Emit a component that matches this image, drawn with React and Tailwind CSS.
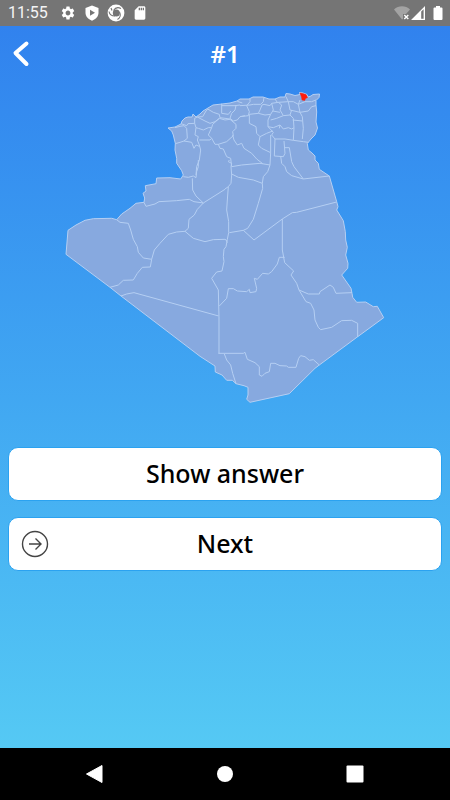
import { MdSettings, MdSdCard } from 'react-icons/md';

const COUNTRY =
  'M168 128L175 127 181 124 182 121 185 118 188 117 192 117 193 114 196 117 200 114 203 111 208 108 213 105 222 104 230 103 237 101 240 99 249 99 253 97 263 97 269 99 275 99 280 97 285 97 286 93.5 290 94 295 95.5 300 94.5 299.5 92.5 303 93 307 94.5 308 97 311 96 313 94.5 319.5 94 319 97.5 316 100.5 316 105 316.7 112 316 122 317.5 128 315 135 311 139 307.3 143.5 308.3 150 312 153 315 156 315 160 318.3 163.3 319.3 169.3 329.3 176 336.7 201.7 338 206.7 336.7 210 343.3 220.7 345.3 231.7 345.7 240 347.3 247.3 345.7 255 348 263.3 347.7 268.3 341.7 275 351 288.3 352 293.3 352.7 297.3 356.7 302.3 365.7 302 373.3 306.7 377.3 306.3 383.7 317.7 357.7 336.7 319.3 365 315 368.3 289.3 393.7 250 402.3 246.7 399.3 248 395 248 387.3 244 385.7 236 383.7 232.3 380.3 226.7 380.3 222 375 215.3 372 215 366 200 356.3 159 325 121 296 110 287.3 66 254.3 68 230.3 76 225 85 220.3 93.3 218.7 111.7 218.3 116.7 219.7 121.7 214 130 208.3 136 203.3 144 202.3 144.7 198 143 193.3 146 191 145.3 185.7 156 183.7 156.7 178 170 177.7 180.7 179 183.3 175 181.7 170.7 176.7 163.3 176.7 158.3 175 150 175.3 143.3 173.3 135 171.7 131Z';

// province borders, one sheet for each part of the country
const BORDERS = [
  {
    id: 'north-west',
    transform: 'translate(160 85) scale(0.3333)',
    d: 'M45 128L60 124 72 122 80 130 82 160 72 168 60 172 46 176M72 168L95 172 102 190 108 180 118 184M63 116L80 122 84 116 104 115 108 128 115 130M104 115L104 100 112 96 135 108 150 115 165 110 178 100M108 128L105 150 115 155 112 165 118 180 122 195 118 225 110 245 108 270M115 130L130 135 145 128 155 128 158 118 178 100M155 128L145 150 155 160 150 165 118 165M155 160L165 178 175 178M112 96L128 95 138 78 143 72 160 82 178 88 180 98 210 102M185 56L185 85 205 88 213 78M185 62L228 62 225 75 215 85 210 100 220 108 232 105 240 95 255 92M178 100L195 105 210 103 228 118 228 130 218 140 220 152 200 170 175 178 180 190 190 192 200 215 212 220 215 245M218 150L222 165 232 180 245 175 252 190 275 205 290 222 308 236M225 62L240 60M232 49L247 54',
  },
  {
    id: 'north-east',
    transform: 'translate(240 85) scale(0.3333)',
    d: 'M0 62L30 60 40 58 62 58 70 50 72 37M20 62L30 50 30 42M20 62L28 80 25 92 0 95M28 88L55 85 60 75 66 60 72 58 90 62 95 55 115 52 145 50M95 55L100 75 92 88 84 105 84 125M55 85L75 90 92 88M98 78L120 82M115 52L125 60 120 75 130 92M105 42L112 52M138 35L145 50 160 50 175 58 195 50 215 50 228 45M145 50L150 75 180 82 205 78 215 65 228 62M180 45L175 58 180 82M92 105L110 100 130 92 150 90 155 75M150 90L160 100 162 128 155 132 145 128 130 132 120 120 100 128 84 125M120 120L118 130M180 82L187 95 190 130 187 162M158 105L187 108M84 125L100 142 95 150 105 162 135 162 160 166 190 170 205 172M162 128L160 166M28 88L28 115 48 125 50 145 60 155 55 180 65 190 92 203M60 155L80 145 98 138M92 150L92 203 90 240M105 162L103 213 130 215 135 205 132 168M122 213L125 235M135 188L148 188 155 230',
  },
  {
    id: 'west',
    transform: 'translate(60 160) scale(0.3333)',
    d: 'M170 179L180 187 205 190 212 210 220 238 232 260 235 277 250 294 275 298M252 127L258 139 285 132 297 125 350 122 388 118 402 125 430 129 495 88M397 55L398 90 408 108 430 129 412 148 403 165 387 178 385 205 375 214 350 216 325 223 300 250 283 270 275 298 271 321 247 322 232 340 220 360 190 361 175 375 150 382M375 214L400 235 435 245 460 239 495 238M370 50L385 52 400 48 408 53 410 35 415 20 415 0M183 408L200 402 222 398 240 403 476 468',
  },
  {
    id: 'east',
    transform: 'translate(200 160) scale(0.3333)',
    d: 'M75 87L85 80 93 70 95 45 93 20 95 10 85 5 88 0M95 20L125 15 180 10 210 15 203 35 190 50 187 70 188 85 175 130 160 178 143 205 130 211 88 218M95 42L115 52 160 60 187 70M85 80L82 120 80 150 86 185 86 218 82 238 78 260 72 268 70 290 72 305 66 333 50 336 35 355 55 390 57 470 57 580M75 239L78 239 82 248M130 211L162 240 247 177 277 158 290 157 410 126M247 177L247 270 254 308 281 333 273 345 290 370 297 390 318 425 332 430 342 450 345 480 355 502 362 509 395 502 425 482 455 481 473 490 473 531M297 390L325 402 358 402 360 395 390 375 400 382 408 400 456 398M254 292L238 292 232 312 215 335 205 342 188 340 172 358 163 355 170 385 168 395 150 398 148 388 140 395 112 393 100 386 85 386 80 415 58 438M245 10L255 20 260 35 275 47 310 57 388 48M275 5L282 20 310 57',
  },
  {
    id: 'south',
    transform: 'translate(200 290) scale(0.3333)',
    d: 'M55 190L130 190 135 187 142 208 165 218 178 230 178 255 186 259 195 250 208 245 212 220 225 220 240 227 260 228 265 232 288 232 296 205 302 197 315 200 328 211 340 209 358 225M73 192L80 210 92 225 98 250 108 281',
  },
];

const SELECTED = 'M300 93L302.500 93.500 306 94.500 307.500 97.500 305.500 98.500 304.700 100.500 302 100 301.500 97Z';

function StatusBar() {
  return (
    <div className="flex h-[26px] shrink-0 items-center justify-between bg-[#757575] pr-[7px] pl-2 text-white">
      <div className="flex items-center gap-2">
        <span className="mr-1 font-[Roboto] text-base leading-none text-gray-100">11:55</span>
        <MdSettings className="size-4" />
        <svg viewBox="0 0 16 16" className="size-4">
          <path fill="currentColor" d="M8 .5L14.5 3v4.800c0 3.600-2.600 6.500-6.500 7.900-3.900-1.400-6.500-4.300-6.500-7.900V3z" />
          <path fill="#757575" d="M6 4.800v6l5-3z" />
        </svg>
        <svg viewBox="0 0 18 18" className="-mx-px size-[18px]">
          <circle cx="9" cy="9" r="8.400" fill="currentColor" />
          <circle cx="9.300" cy="9" r="3.500" fill="#757575" />
          <path
            fill="none"
            stroke="#757575"
            strokeWidth="1.100"
            d="M6.500 6.500C8 4 11 3 14 4.500M12.500 8c1.500 3 .5 6-2 7.500M8 12c-3 0-5.500-1.500-6-4.500M4 4l1 2.500"
          />
        </svg>
        <MdSdCard className="size-4" />
      </div>
      <div className="flex items-center gap-1">
        <svg viewBox="0 0 36 16" className="h-4 w-9">
          <path fill="#a3a3a3" d="M1 4.500C5.500.2 12.500.2 17 4.500L13 9H10v5l-1 .5z" />
          <path stroke="currentColor" strokeWidth="1.400" d="M11.300 10l4 4M15.300 10l-4 4" />
          <path fill="currentColor" fillRule="evenodd" d="M32 1v14H18zM28.200 6.500v7.200h2.400V4.300z" />
        </svg>
        <svg viewBox="0 0 10 16" className="h-4 w-[10px]">
          <path fill="currentColor" d="M3 1h4v1.500h1.500q1 0 1 1V14q0 1-1 1h-7q-1 0-1-1V3.500q0-1 1-1H3z" />
        </svg>
      </div>
    </div>
  );
}

function CountryMap() {
  return (
    <svg viewBox="60 88 330 320" className="h-80 w-[330px]" role="img">
      <g strokeLinejoin="round" strokeWidth="1" stroke="#b5cff3">
        <path d={COUNTRY} fill="#87a9df" />
        {BORDERS.map((sheet) => (
          <path
            key={sheet.id}
            d={sheet.d}
            transform={sheet.transform}
            fill="none"
            vectorEffect="non-scaling-stroke"
          />
        ))}
      </g>
      <path d={SELECTED} fill="#ff1c0c" stroke="#ff1c0c" strokeWidth="0.500" />
    </svg>
  );
}

function AnswerButton({ icon, children }) {
  return (
    <button
      type="button"
      className="relative flex h-[54px] w-full items-center justify-center rounded-[10px] border border-[#2ba2f0] bg-white text-[25px] font-medium text-black"
    >
      {icon}
      {children}
    </button>
  );
}

function NavigationBar() {
  return (
    <nav className="flex h-[52px] shrink-0 items-center justify-center gap-[104px] bg-black text-white">
      <button type="button" aria-label="Back">
        <svg viewBox="0 0 26 26" className="size-[26px]">
          <path fill="currentColor" d="M4.500 13L20 4.500v17z" stroke="currentColor" strokeLinejoin="round" />
        </svg>
      </button>
      <button type="button" aria-label="Home">
        <svg viewBox="0 0 26 26" className="size-[26px]">
          <circle cx="13" cy="13" r="8" fill="currentColor" />
        </svg>
      </button>
      <button type="button" aria-label="Recent apps">
        <svg viewBox="0 0 26 26" className="size-[26px]">
          <rect x="4.500" y="4.500" width="17" height="17" rx="1" fill="currentColor" />
        </svg>
      </button>
    </nav>
  );
}

export default function App() {
  return (
    <div className="flex min-h-screen flex-col font-['Noto_Sans',sans-serif]">
      <StatusBar />
      <div className="flex grow flex-col bg-linear-to-b from-[#3182ee] to-[#55c9f4]">
        <header className="grid h-14 grid-cols-3 items-center px-2 text-white">
          <button type="button" aria-label="Back" className="justify-self-start">
            <svg viewBox="0 0 28 28" className="size-7">
              <path
                d="M18.500 3.500L7.500 13l11 11"
                fill="none"
                stroke="currentColor"
                strokeWidth="4"
                strokeLinecap="round"
                strokeLinejoin="round"
              />
            </svg>
          </button>
          <h1 className="text-center text-2xl font-semibold">#1</h1>
        </header>

        <main className="flex flex-col px-2 pt-1.5">
          <div className="flex justify-center">
            <CountryMap />
          </div>

          {/* Answer controls */}
          <div className="mt-[39px] flex flex-col gap-4">
            <AnswerButton>Show answer</AnswerButton>
            <AnswerButton
              icon={
                <svg viewBox="0 0 28 28" className="absolute left-3 size-7" fill="none" stroke="#444" strokeWidth="1.400">
                  <circle cx="14" cy="14" r="12.500" />
                  <path d="M8 14h12M14.500 8.500L20 14l-5.500 5.500" />
                </svg>
              }
            >
              Next
            </AnswerButton>
          </div>
        </main>
      </div>
      <NavigationBar />
    </div>
  );
}
